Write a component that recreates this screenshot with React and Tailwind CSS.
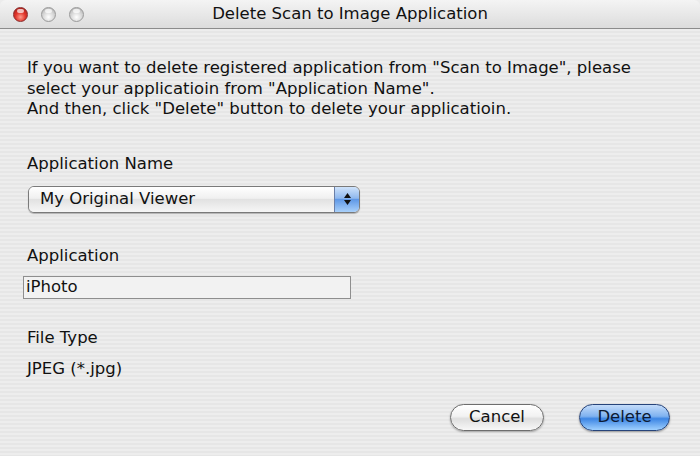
import React from 'react';

const Light = ({ red }) => (
  <div
    className={`w-[15px] h-[15px] rounded-full border ${
      red
        ? 'border-[#8a2a2a] bg-[radial-gradient(circle_at_50%_70%,#ff9a8a_0%,#e0342a_45%,#9a1a14_100%)]'
        : 'border-[#9a9a9a] bg-[radial-gradient(circle_at_50%_70%,#ffffff_0%,#d6d6d6_50%,#a8a8a8_100%)]'
    } relative`}
  >
    <div className="absolute left-[3px] top-[1px] w-[7px] h-[4px] rounded-full bg-white/70" />
  </div>
);

const App = () => {
  return (
    <div
      className="w-[700px] h-[456px] overflow-hidden flex flex-col text-[#111] bg-[#ececec]"
      style={{ fontFamily: '"DejaVu Sans", "Liberation Sans", sans-serif' }}
    >
      {/* Title bar */}
      <div className="h-[29px] shrink-0 flex items-center relative rounded-t-[6px] border-b border-[#8c8c8c] bg-[linear-gradient(#f4f4f4,#dcdcdc)]">
        <div className="flex items-center gap-[13px] pl-[13px]">
          <Light red />
          <Light />
          <Light />
        </div>
        <div className="absolute inset-0 flex items-center justify-center text-[16.5px] text-[#111] pl-[0px]">
          Delete Scan to Image Application
        </div>
      </div>

      {/* Body */}
      <div className="flex-1 flex flex-col px-[27px] text-[16.5px] bg-[repeating-linear-gradient(#ededed_0px,#ededed_2px,#e6e6e6_2px,#e6e6e6_4px)]">
        <p className="mt-[29px] leading-[20.5px]">
          If you want to delete registered application from "Scan to Image", please
          <br />
          select your applicatioin from "Application Name".
          <br />
          And then, click "Delete" button to delete your applicatioin.
        </p>

        <div className="mt-[34px] leading-[20px]">Application Name</div>
        <div className="mt-[12px] w-[332px] h-[27px] ml-[1px] flex items-stretch rounded-[6px] border border-[#7a7a7a] overflow-hidden shadow-[0_1px_1px_rgba(0,0,0,0.25)]">
          <div className="flex-1 flex items-center pl-[11px] bg-[linear-gradient(#ffffff,#f0f0f0_45%,#e2e2e2_50%,#f6f6f6)]">
            My Original Viewer
          </div>
          <div className="w-[25px] flex flex-col items-center justify-center gap-[2px] border-l border-[#6a7fa8] bg-[linear-gradient(#cfe3fb,#8fb8ee_45%,#5f98e6_50%,#a9d0fa)]">
            <svg width="7" height="5" viewBox="0 0 7 5"><path d="M3.5 0 L7 5 L0 5 Z" fill="#111" /></svg>
            <svg width="7" height="5" viewBox="0 0 7 5"><path d="M0 0 L7 0 L3.5 5 Z" fill="#111" /></svg>
          </div>
        </div>

        <div className="mt-[33px] leading-[20px]">Application</div>
        <div className="mt-[10px] -ml-[4px] w-[328px] h-[23px] flex items-center pl-[2px] bg-[#f2f2f2] border border-[#8e8e8e]">
          iPhoto
        </div>

        <div className="mt-[29px] leading-[20px]">File Type</div>
        <div className="mt-[11px] leading-[20px]">JPEG (*.jpg)</div>

        <div className="mt-[25px] flex justify-end gap-[35px] pr-[3px]">
          <button className="w-[94px] h-[27px] rounded-full border border-[#6d6d6d] text-[#111] bg-[linear-gradient(#ffffff,#f2f2f2_45%,#dedede_55%,#f8f8f8)] shadow-[0_1px_2px_rgba(0,0,0,0.3)]">
            Cancel
          </button>
          <button className="w-[91px] h-[27px] rounded-full border border-[#27447a] text-[#0d1a33] bg-[linear-gradient(#c4dcfa,#7fb2f0_45%,#3d86e4_55%,#9fd0ff)] shadow-[0_1px_2px_rgba(0,0,0,0.35)]">
            Delete
          </button>
        </div>
      </div>
    </div>
  );
};

export default App;
